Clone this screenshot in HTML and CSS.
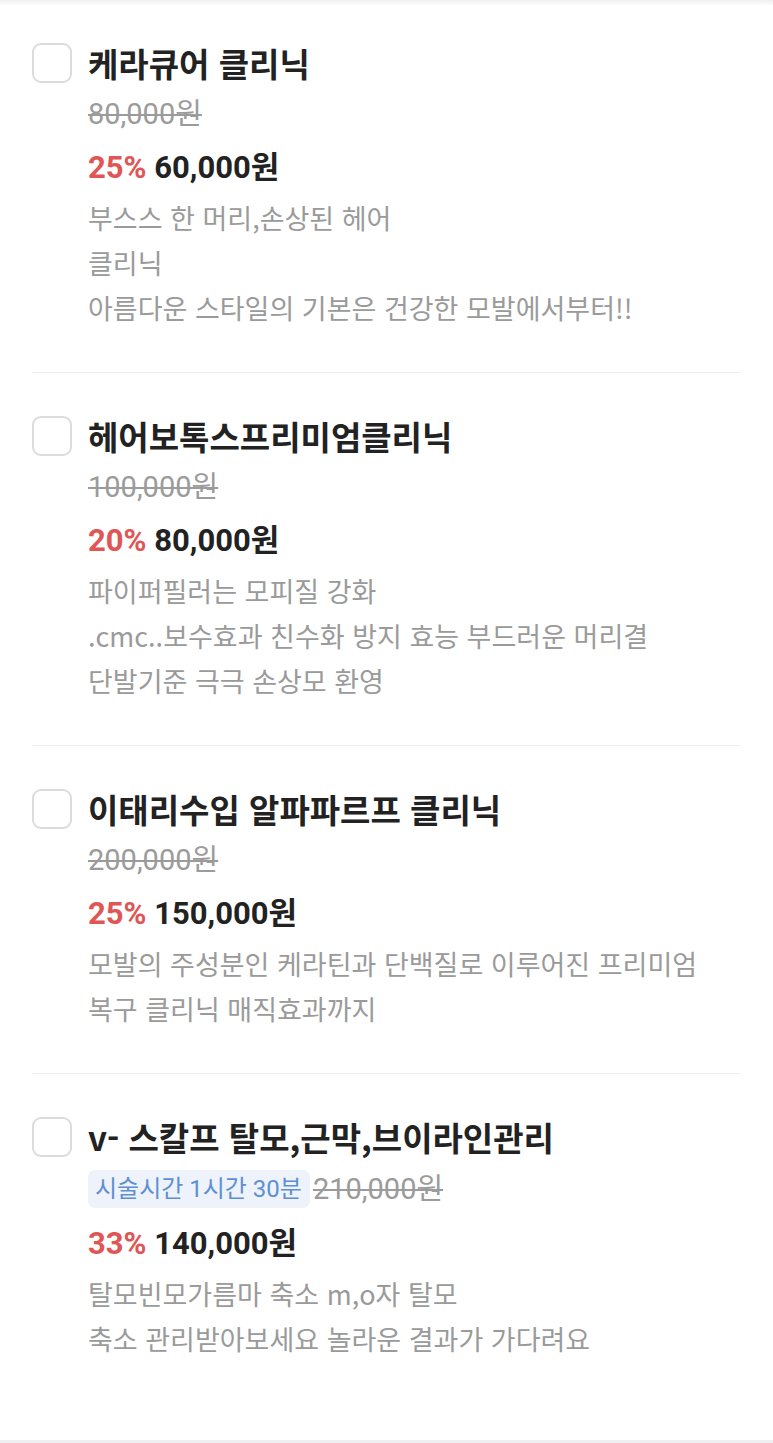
FILE: index.html
```html
<!DOCTYPE html>
<html lang="ko">
<head>
<meta charset="utf-8">
<title>클리닉</title>
<link rel="stylesheet" href="styles.css">
</head>
<body>
<div class="page">
  <ul class="list">
    <li class="item">
      <span class="check"></span>
      <div class="info">
        <div class="title">케라큐어 클리닉</div>
        <div class="orig-row"><span class="orig">80,000원</span></div>
        <div class="price-row"><span class="rate">25%</span> <span class="price">60,000원</span></div>
        <div class="desc">부스스 한 머리,손상된 헤어<br>클리닉<br>아름다운 스타일의 기본은 건강한 모발에서부터!!</div>
      </div>
    </li>
    <li class="item">
      <span class="check"></span>
      <div class="info">
        <div class="title">헤어보톡스프리미엄클리닉</div>
        <div class="orig-row"><span class="orig">100,000원</span></div>
        <div class="price-row"><span class="rate">20%</span> <span class="price">80,000원</span></div>
        <div class="desc">파이퍼필러는 모피질 강화<br>.cmc..보수효과 친수화 방지 효능 부드러운 머리결<br>단발기준 극극 손상모 환영</div>
      </div>
    </li>
    <li class="item">
      <span class="check"></span>
      <div class="info">
        <div class="title">이태리수입 알파파르프 클리닉</div>
        <div class="orig-row"><span class="orig">200,000원</span></div>
        <div class="price-row"><span class="rate">25%</span> <span class="price">150,000원</span></div>
        <div class="desc">모발의 주성분인 케라틴과 단백질로 이루어진 프리미엄<br>복구 클리닉 매직효과까지</div>
      </div>
    </li>
    <li class="item">
      <span class="check"></span>
      <div class="info">
        <div class="title">v- 스칼프 탈모,근막,브이라인관리</div>
        <div class="orig-row"><span class="tag">시술시간 1시간 30분</span><span class="orig">210,000원</span></div>
        <div class="price-row"><span class="rate">33%</span> <span class="price">140,000원</span></div>
        <div class="desc">탈모빈모가름마 축소 m,o자 탈모<br>축소 관리받아보세요 놀라운 결과가 가다려요</div>
      </div>
    </li>
  </ul>
  <div class="footer"></div>
</div>
</body>
</html>
```

FILE: styles.css
```css
* { box-sizing: border-box; }
html, body { margin: 0; padding: 0; }
body {
  background: #ffffff;
  font-family: "Noto Sans CJK KR", "Noto Sans", sans-serif;
  color: #222222;
}
.page {
  background: linear-gradient(#efeff1 0px, #ffffff 6px);
  min-height: 1443px;
  display: flex;
  flex-direction: column;
}
.list {
  list-style: none;
  margin: 0;
  padding: 0 32px;
  flex: 1;
}
.item {
  display: flex;
  align-items: flex-start;
  gap: 16px;
  padding: 42px 0 42px;
  border-bottom: 1px solid #eeeeee;
}
.item:last-child { border-bottom: none; }
.check {
  flex: none;
  width: 40px;
  height: 40px;
  margin-top: 1px;
  border: 2px solid #dcdcdc;
  border-radius: 9px;
  background: #fff;
}
.info { flex: 1; min-width: 0; }
.title {
  font-size: 33px;
  font-weight: 700;
  line-height: 42px;
  color: #222222;
}
.orig-row {
  margin-top: 12px;
  display: flex;
  align-items: center;
  min-height: 36px;
}
.orig {
  font-family: Roboto, "Noto Sans CJK KR", sans-serif;
  font-size: 29px;
  line-height: 36px;
  color: #9b9b9b;
  text-decoration: line-through;
  text-decoration-thickness: 2px;
}
.tag {
  font-family: Roboto, "Noto Sans CJK KR", sans-serif;
  background: #eef3fb;
  color: #5e8fd2;
  font-size: 24px;
  line-height: 38px;
  padding: 0 8px 0 7px;
  border-radius: 7px;
  margin-right: 3px;
}
.price-row {
  margin-top: 16px;
  line-height: 40px;
  font-family: Roboto, "Noto Sans CJK KR", sans-serif;
  font-size: 31px;
  font-weight: 700;
}
.rate { color: #e05555; }
.price { color: #222222; }
.desc {
  margin-top: 7px;
  font-size: 27px;
  line-height: 45px;
  color: #9a9a9a;
}
.footer {
  height: 3px;
  background: #efeff2;
}
```
